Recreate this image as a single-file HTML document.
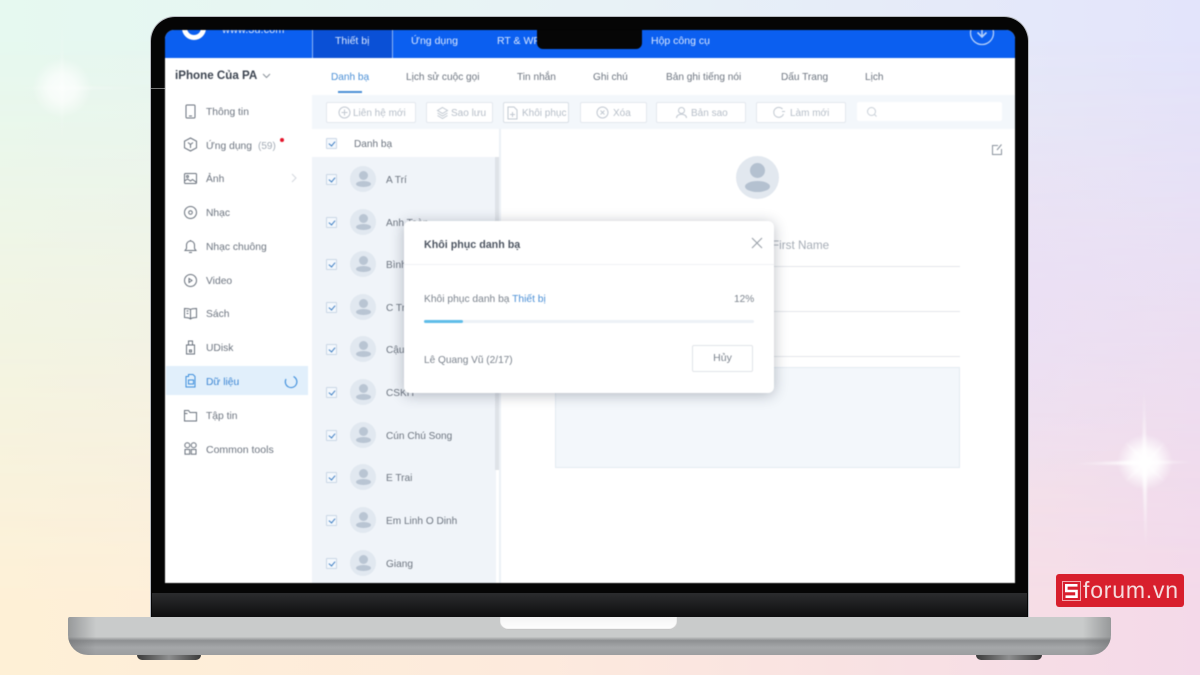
<!DOCTYPE html>
<html><head><meta charset="utf-8"><style>
html,body{margin:0;padding:0}
body{width:1200px;height:675px;overflow:hidden;position:relative;font-family:"Liberation Sans","Noto Sans CJK SC",sans-serif;background:linear-gradient(90deg,#e6f9f0 0%,#e8f2f6 50%,#e3e4fb 100%)}
#bg{position:absolute;inset:0;background:linear-gradient(90deg,#fef0d6 0%,#fdeadd 45%,#f4d9e9 100%);-webkit-mask-image:linear-gradient(180deg,transparent 5%,#000 90%);mask-image:linear-gradient(180deg,transparent 5%,#000 90%)}
#bg2{position:absolute;left:600px;top:100px;width:600px;height:420px;background:radial-gradient(closest-side,rgba(233,220,248,.8),rgba(233,220,248,0));}
.a{position:absolute}
.t{position:absolute;white-space:nowrap;font-size:10.1px;color:#6d7580;line-height:14px;margin-top:2px}
.s{font-size:10.3px}
.h{font-size:10.5px;color:#dbe8ff;margin-top:1px}
#screen{position:absolute;left:165px;top:30px;width:850px;height:553px;background:#fff;overflow:hidden;border-radius:9px 9px 0 0;filter:blur(.5px)}
#screen .t,#screen .a{position:absolute}
.ck{position:absolute;left:161px;width:9px;height:9px;background:#f4f8fd;border:1px solid #c9d6e6;border-radius:1px}
.ck:after{content:"";position:absolute;left:2.5px;top:.5px;width:3px;height:5px;border:solid #3f7fc4;border-width:0 1.4px 1.4px 0;transform:rotate(40deg)}
.av{position:absolute;left:185px;width:26px;height:26px;border-radius:50%;background:#e1e8f0}
.av:before{content:"";position:absolute;left:8.5px;top:4.5px;width:9px;height:9px;border-radius:50%;background:#b9c5d3}
.av:after{content:"";position:absolute;left:5.5px;top:15px;width:15px;height:6px;border-radius:50%;background:#b9c5d3}
.btn{position:absolute;top:72px;height:19px;background:#fff;border:1px solid #e3e8ee;border-radius:2px;font-size:10px;color:#b6bec8;line-height:22px;white-space:nowrap}
.btn span{position:absolute;top:0;white-space:nowrap}
.btn svg{position:absolute;top:3px;left:0}
.ic{position:absolute;left:18px;width:15px;height:15px;fill:none;stroke:#6a727d;stroke-width:1}
</style></head><body>
<div id="bg"></div><div id="bg2"></div>

<svg class="a" style="left:0;top:0" width="1200" height="675">
<defs>
<radialGradient id="g1"><stop offset="0" stop-color="#fff" stop-opacity="1"/><stop offset=".45" stop-color="#fff" stop-opacity=".85"/><stop offset="1" stop-color="#fff" stop-opacity="0"/></radialGradient>
<linearGradient id="h1" x1="0" x2="1" y1="0" y2="0"><stop offset="0" stop-color="#fff" stop-opacity="0"/><stop offset=".5" stop-color="#fff" stop-opacity=".9"/><stop offset="1" stop-color="#fff" stop-opacity="0"/></linearGradient>
<linearGradient id="v1" x1="0" x2="0" y1="0" y2="1"><stop offset="0" stop-color="#fff" stop-opacity="0"/><stop offset=".5" stop-color="#fff" stop-opacity=".9"/><stop offset="1" stop-color="#fff" stop-opacity="0"/></linearGradient>
<filter id="bl"><feGaussianBlur stdDeviation="1"/></filter>
</defs>
<g filter="url(#bl)">
<circle cx="62" cy="88" r="30" fill="url(#g1)" opacity=".75"/>
<polygon points="0,88 62,86 160,88 62,90" fill="url(#h1)" opacity=".35"/>
<polygon points="62,0 64,88 62,165 60,88" fill="url(#v1)" opacity=".3"/>
<circle cx="1145" cy="462" r="28" fill="url(#g1)"/>
<polygon points="1065,464 1145,460 1200,462 1145,465" fill="url(#h1)"/>
<polygon points="1144,380 1147,462 1146,560 1142,462" fill="url(#v1)"/>
<polygon points="1125,442 1147,460 1165,442 1148,464 1165,482 1145,465 1125,482 1143,462" fill="#fff" opacity=".55"/>
</g>
</svg>

<div class="a" style="left:151px;top:17px;width:877px;height:601px;background:#050505;border-radius:24px 24px 0 0;box-shadow:0 0 0 1px #b9bcc2"></div>
<div class="a" style="left:152px;top:593px;width:875px;height:24px;background:linear-gradient(180deg,#2b2c2e,#0e0e0f)"></div>
<div class="a" style="left:151px;top:88px;width:14px;height:1px;background:#777"></div>

<div id="screen">
  <div class="a" style="left:0;top:0;width:850px;height:28px;background:#0b5ff0"></div>
  <div class="a" style="left:147px;top:0;width:81px;height:28px;background:#0a50d6;border-left:1px solid #8db6f7;border-right:1px solid #8db6f7;box-sizing:border-box"></div>
  <div class="a" style="left:17px;top:-14px;width:24px;height:24px;border-radius:50%;border:5px solid #fff;box-sizing:border-box;background:#0b5ff0"></div>
  <div class="t h" style="left:57px;top:-8px;font-size:11px;color:#d5e4fd">www.3u.com</div>
  <div class="t h" style="left:170px;top:3px">Thiết bị</div>
  <div class="t h" style="left:246px;top:3px">Ứng dụng</div>
  <div class="t h" style="left:332px;top:3px">RT &amp; WP</div>
  <div class="t h" style="left:486px;top:3px">Hộp công cụ</div>
  <svg class="a" style="left:804px;top:-10px" width="26" height="28" fill="none" stroke="#b5d0fb" stroke-width="1.3"><circle cx="13" cy="13" r="11.5"/><path d="M13 6v11M8.5 12.5 13 17l4.500-4.500" stroke-width="1.600"/></svg>
  <div class="a" style="left:372px;top:0;width:105px;height:19px;background:#060606;border-radius:0 0 6px 6px"></div>

  <div class="t" style="left:10px;top:37px;font-size:11.6px;font-weight:bold;color:#3c4450">iPhone Của PA</div>
  <svg class="a" style="left:97px;top:43px" width="9" height="6" fill="none" stroke="#8b929b"><path d="M1 1l3.500 3.500L8 1"/></svg>

  <div class="a" style="left:1px;top:336px;width:142px;height:29px;background:#e1effb"></div>

  <svg class="ic" style="top:74px" viewBox="0 0 15 15"><rect x="3" y="1" width="9" height="13" rx="1"/><path d="M6 12h3"/></svg>
  <div class="t s" style="left:41px;top:74px">Thông tin</div>
  <svg class="ic" style="top:107px" viewBox="0 0 15 15"><path d="M7.500 1 13.500 4.200v6.600L7.500 14 1.500 10.800V4.200z"/><path d="M5 5.500l2.500 2 2.500-2M7.500 7.500V11"/></svg>
  <div class="t s" style="left:41px;top:108px">Ứng dụng</div>
  <div class="t" style="left:93px;top:108px;font-size:10px;color:#a4acb6">(59)</div>
  <div class="a" style="left:115px;top:108px;width:4px;height:4px;border-radius:50%;background:#e5142a"></div>
  <svg class="ic" style="top:141px" viewBox="0 0 15 15"><rect x="1.500" y="2.500" width="12" height="10" rx="1"/><circle cx="4.500" cy="5.500" r="1"/><path d="M1.500 10l3-2 3 2 2-1.500 4 3"/></svg>
  <div class="t s" style="left:41px;top:141px">Ảnh</div>
  <svg class="a" style="left:126px;top:143px" width="6" height="10" fill="none" stroke="#d3d8de"><path d="M1 1l4 4-4 4"/></svg>
  <svg class="ic" style="top:175px" viewBox="0 0 15 15"><circle cx="7.500" cy="7.500" r="6"/><circle cx="7.500" cy="7.500" r="1.800"/></svg>
  <div class="t s" style="left:41px;top:175px">Nhạc</div>
  <svg class="ic" style="top:209px" viewBox="0 0 15 15"><path d="M2 11.500h11l-1.500-2V6a4 4 0 0 0-8 0v3.500zM6 13.500h3M7.500 1v1"/></svg>
  <div class="t s" style="left:41px;top:209px">Nhạc chuông</div>
  <svg class="ic" style="top:243px" viewBox="0 0 15 15"><circle cx="7.500" cy="7.500" r="6"/><path d="M6 5.500v4l3-2z"/></svg>
  <div class="t s" style="left:41px;top:243px">Video</div>
  <svg class="ic" style="top:276px" viewBox="0 0 15 15"><path d="M7.500 3.500C6 2.500 3.500 2.500 1.500 2.500v9c2 0 4.500 0 6 1.500 1.500-1.500 4-1.500 6-1.500v-9c-2 0-4.500 0-6 1zM7.500 3.500V13M3.500 5h2M3.500 7.500h2"/></svg>
  <div class="t s" style="left:41px;top:276px">Sách</div>
  <svg class="ic" style="top:310px" viewBox="0 0 15 15"><path d="M5.500 1h4v4h-4zM3.500 5h8v9h-8zM6.500 10h2v2h-2z"/></svg>
  <div class="t s" style="left:41px;top:310px">UDisk</div>
  <svg class="ic" style="top:343px;stroke:#3f8fdc" viewBox="0 0 15 15"><path d="M3 3.500h2.500V1.500h4.500l2 2v10.500H3zM5.500 7h5v4h-5z"/></svg>
  <div class="t s" style="left:41px;top:344px;color:#3c86d4">Dữ liệu</div>
  <svg class="a" style="left:119px;top:345px" width="14" height="14" fill="none" stroke="#3f8fdc" stroke-width="1.100"><path d="M9.500 1.500A5.800 5.800 0 1 1 2 4"/></svg>
  <svg class="ic" style="top:378px" viewBox="0 0 15 15"><path d="M1.500 2.500h4l1.500 2h6.500v8.500h-12zM1.500 5.500h3"/></svg>
  <div class="t s" style="left:41px;top:378px">Tập tin</div>
  <svg class="ic" style="top:411px" viewBox="0 0 15 15"><circle cx="4.300" cy="4.300" r="2.500"/><circle cx="10.700" cy="4.300" r="2.500"/><rect x="2" y="8.500" width="4.700" height="4.700"/><rect x="8.300" y="8.500" width="4.700" height="4.700"/></svg>
  <div class="t s" style="left:41px;top:411px;font-size:10.5px">Common tools</div>

  <div class="t" style="left:166px;top:39px;color:#4a8fd6">Danh bạ</div>
  <div class="a" style="left:173px;top:61px;width:24px;height:2px;background:#4a8fd6"></div>
  <div class="t" style="left:241px;top:39px">Lịch sử cuộc gọi</div>
  <div class="t" style="left:352px;top:39px">Tin nhắn</div>
  <div class="t" style="left:428px;top:39px">Ghi chú</div>
  <div class="t" style="left:501px;top:39px">Bản ghi tiếng nói</div>
  <div class="t" style="left:616px;top:39px">Dấu Trang</div>
  <div class="t" style="left:700px;top:39px">Lịch</div>

  <div class="a" style="left:147px;top:65px;width:703px;height:34px;background:#f3f7fb"></div>
  <div class="btn" style="left:161px;width:88px"><svg style="left:11px" width="13" height="13" fill="none" stroke="#c1c8d1"><circle cx="6.500" cy="6.500" r="5.500"/><path d="M6.500 3.500v6M3.500 6.500h6"/></svg><span style="left:26px">Liên hệ mới</span></div>
  <div class="btn" style="left:261px;width:65px"><svg style="left:9px" width="13" height="13" fill="none" stroke="#c1c8d1"><path d="M6.500 1.500l5 3-5 3-5-3zM1.500 7l5 3 5-3M1.500 9.500l5 3 5-3"/></svg><span style="left:24px">Sao lưu</span></div>
  <div class="btn" style="left:338px;width:64px;border-color:#d9dfe6"><svg style="left:2px" width="13" height="14" fill="none" stroke="#c1c8d1"><path d="M2 1h6l3 3v9H2zM6.500 6v5M4 8.500h5"/></svg><span style="left:18px">Khôi phục</span></div>
  <div class="btn" style="left:415px;width:65px"><svg style="left:15px" width="13" height="13" fill="none" stroke="#c1c8d1"><circle cx="6.500" cy="6.500" r="5.500"/><path d="M4.500 4.500l4 4M8.500 4.500l-4 4"/></svg><span style="left:32px">Xóa</span></div>
  <div class="btn" style="left:491px;width:88px"><svg style="left:18px" width="13" height="13" fill="none" stroke="#c1c8d1"><circle cx="6.500" cy="4.500" r="3"/><path d="M1.500 12c0-5 10-5 10 0"/></svg><span style="left:34px">Bản sao</span></div>
  <div class="btn" style="left:591px;width:88px"><svg style="left:15px" width="14" height="13" fill="none" stroke="#c1c8d1"><path d="M10.500 3A5 5 0 1 0 11.500 8M10 5.500h3"/></svg><span style="left:33px">Làm mới</span></div>
  <div class="a" style="left:692px;top:72px;width:145px;height:19px;background:#fff;border-radius:2px"></div>
  <svg class="a" style="left:701px;top:76px" width="12" height="12" fill="none" stroke="#c9d0d8"><circle cx="5.500" cy="5.500" r="4"/><path d="M8.500 8.500l2 2"/></svg>

  <div class="a" style="left:147px;top:127px;width:184px;height:426px;background:#f0f4f9"></div>
  <div class="a" style="left:330px;top:127px;width:4px;height:313px;background:#dfe3e8"></div>
  <div class="a" style="left:334px;top:99px;width:2px;height:454px;background:#edf1f6"></div>
  <div class="ck" style="top:108px"></div>
  <div class="t" style="left:189px;top:106px">Danh bạ</div>

  <div class="ck" style="top:144px"></div><div class="av" style="top:136px"></div><div class="t" style="left:221px;top:142px">A Trí</div>
  <div class="ck" style="top:187px"></div><div class="av" style="top:179px"></div><div class="t" style="left:221px;top:185px">Anh Toàn</div>
  <div class="ck" style="top:229px"></div><div class="av" style="top:221px"></div><div class="t" style="left:221px;top:227px">Bình</div>
  <div class="ck" style="top:272px"></div><div class="av" style="top:264px"></div><div class="t" style="left:221px;top:270px">C Trí</div>
  <div class="ck" style="top:314px"></div><div class="av" style="top:306px"></div><div class="t" style="left:221px;top:312px">Cậu</div>
  <div class="ck" style="top:357px"></div><div class="av" style="top:349px"></div><div class="t" style="left:221px;top:355px">CSKH</div>
  <div class="ck" style="top:400px"></div><div class="av" style="top:392px"></div><div class="t" style="left:221px;top:398px">Cún Chú Song</div>
  <div class="ck" style="top:442px"></div><div class="av" style="top:434px"></div><div class="t" style="left:221px;top:440px">E Trai</div>
  <div class="ck" style="top:485px"></div><div class="av" style="top:477px"></div><div class="t" style="left:221px;top:483px">Em Linh O Dinh</div>
  <div class="ck" style="top:528px"></div><div class="av" style="top:520px"></div><div class="t" style="left:221px;top:526px">Giang</div>

  <svg class="a" style="left:826px;top:113px" width="12" height="13" fill="none" stroke="#8b939d"><path d="M7 2.500H1.500v9h9V6M6 7l4.500-5.500"/></svg>
  <div class="a" style="left:571px;top:126px;width:43px;height:43px;border-radius:50%;background:#e2e8ef"></div>
  <div class="a" style="left:585px;top:133px;width:15px;height:15px;border-radius:50%;background:#b4c1d0"></div>
  <div class="a" style="left:580px;top:151px;width:25px;height:11px;border-radius:50%;background:#b4c1d0"></div>
  <div class="t" style="left:607px;top:207px;font-size:11.7px;color:#a6adb6">First Name</div>
  <div class="a" style="left:390px;top:236px;width:405px;height:1px;background:#e3e6ea"></div>
  <div class="a" style="left:390px;top:281px;width:405px;height:1px;background:#e3e6ea"></div>
  <div class="a" style="left:390px;top:326px;width:405px;height:1px;background:#e3e6ea"></div>
  <div class="a" style="left:390px;top:337px;width:405px;height:101px;background:#f3f7fb;border:1px solid #e3ebf2;box-sizing:border-box"></div>

  <div class="a" style="left:239px;top:191px;width:370px;height:172px;background:#fff;border-radius:6px;box-shadow:0 2px 14px rgba(40,50,70,.32)"></div>
  <div class="t" style="left:259px;top:206px;font-weight:bold;font-size:10.7px;color:#4e5662">Khôi phục danh bạ</div>
  <svg class="a" style="left:586px;top:207px" width="12" height="12" fill="none" stroke="#9aa1aa" stroke-width="1.100"><path d="M1 1l10 10M11 1 1 11"/></svg>
  <div class="a" style="left:239px;top:234px;width:370px;height:1px;background:#f0f2f5"></div>
  <div class="t" style="left:259px;top:261px;font-size:10.25px;color:#7c848e">Khôi phục danh bạ <span style="color:#4a8fd6">Thiết bị</span></div>
  <div class="t" style="left:569px;top:261px;color:#7c848e">12%</div>
  <div class="a" style="left:259px;top:290px;width:330px;height:3px;background:#edf1f6;border-radius:2px"></div>
  <div class="a" style="left:259px;top:290px;width:39px;height:3px;background:#5fbde8;border-radius:2px"></div>
  <div class="t" style="left:259px;top:322px;color:#7c848e">Lê Quang Vũ (2/17)</div>
  <div class="a" style="left:527px;top:315px;width:59px;height:25px;border:1px solid #e1e4e8;border-radius:2px;background:#fff;text-align:center;line-height:25px;font-size:10.5px;color:#7c848e">Hủy</div>
</div>

<div class="a" style="left:68px;top:617px;width:1043px;height:38px;border-radius:2px 2px 20px 20px;background:linear-gradient(180deg,#c9cbcb 0%,#c9cbcb 52%,#8e9092 62%,#a5a7a9 80%,#9c9ea0 100%);overflow:hidden">
  <div class="a" style="left:0;top:0;width:28px;height:38px;background:linear-gradient(90deg,rgba(110,112,114,.55),rgba(255,255,255,0))"></div>
  <div class="a" style="right:0;top:0;width:28px;height:38px;background:linear-gradient(270deg,rgba(110,112,114,.55),rgba(255,255,255,0))"></div>
  <div class="a" style="left:432px;top:0;width:177px;height:13px;background:linear-gradient(180deg,#f4f4f4,#fff);border-radius:0 0 8px 8px;box-shadow:inset 0 -1px 1px #bbb"></div>
</div>
<div class="a" style="left:137px;top:655px;width:64px;height:5px;background:linear-gradient(90deg,#3a3a3a,#8d8e8f,#3a3a3a);border-radius:0 0 6px 6px"></div>
<div class="a" style="left:976px;top:655px;width:66px;height:5px;background:linear-gradient(90deg,#3a3a3a,#8d8e8f,#3a3a3a);border-radius:0 0 6px 6px"></div>

<div class="a" style="left:1056px;top:574px;width:128px;height:33px;background:#d81f2d;border-radius:3px;overflow:hidden;filter:blur(.3px)">
  <div class="a" style="left:6px;top:7px;width:17px;height:18px;border:1px solid #f2a9ae"></div>
  <svg class="a" style="left:8px;top:9px" width="15" height="16" fill="none" stroke="#fff" stroke-width="2.600"><path d="M13.500 2.300H2.300v5.700h10.200v5.700H1.500"/></svg>
  <div class="a" style="left:27px;top:3px;font-size:23px;line-height:27px;color:#f6dcde;white-space:nowrap;letter-spacing:.8px">forum.vn</div>
</div>
</body></html>
